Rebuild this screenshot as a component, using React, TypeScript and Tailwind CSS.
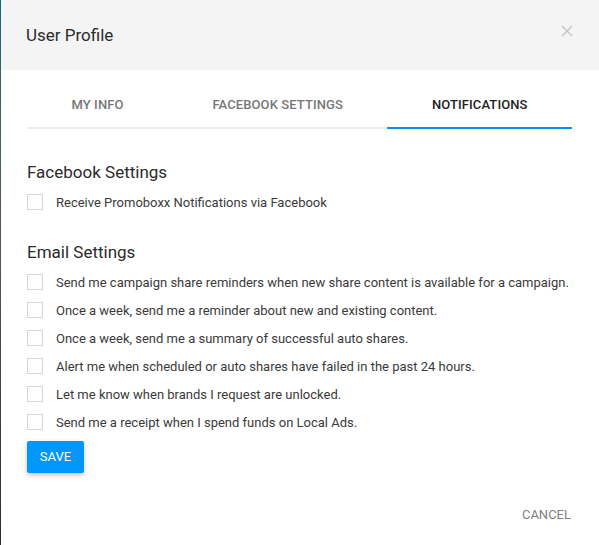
import React, { useState } from 'react';

const emailOptions = [
  'Send me campaign share reminders when new share content is available for a campaign.',
  'Once a week, send me a reminder about new and existing content.',
  'Once a week, send me a summary of successful auto shares.',
  'Alert me when scheduled or auto shares have failed in the past 24 hours.',
  'Let me know when brands I request are unlocked.',
  'Send me a receipt when I spend funds on Local Ads.',
];

const tabs = ['My Info', 'Facebook Settings', 'Notifications'];

function CheckRow({ label }: { label: string }) {
  const [checked, setChecked] = useState(false);
  return (
    <label className="flex items-center h-[28px] cursor-pointer">
      <span
        onClick={() => setChecked(!checked)}
        className={`w-[16px] h-[16px] border shrink-0 ${checked ? 'bg-[#0096fa] border-[#0096fa]' : 'bg-white border-[#d6d6d6]'}`}
      />
      <span className="ml-[13px] text-[13px] text-[#3a3a3a] leading-none">{label}</span>
    </label>
  );
}

export default function App() {
  const [active, setActive] = useState(2);

  return (
    <div className="flex w-full h-[545px] overflow-hidden" style={{ fontFamily: 'Roboto, "Liberation Sans", sans-serif' }}>
      <div className="w-[1px] bg-gradient-to-b from-[#0b6a73] via-[#555] to-[#2c2c2c] shrink-0" />
      <div className="flex-1 bg-white flex flex-col">
        {/* header */}
        <div className="h-[70px] bg-[#f4f4f4] flex items-center justify-between pl-[25px] pr-[26px]">
          <h1 className="text-[17px] text-[#2b2b2b] leading-none">User Profile</h1>
          <button className="text-[#c4c4c4] -mt-[8px]">
            <svg width="12" height="12" viewBox="0 0 12 12" stroke="currentColor" strokeWidth="1.4" fill="none">
              <path d="M1 1L11 11M11 1L1 11" />
            </svg>
          </button>
        </div>

        <div className="px-[26px]">
          {/* tabs */}
          <div className="flex mt-[12px] mr-[1px]">
            {tabs.map((t, i) => (
              <button
                key={t}
                onClick={() => setActive(i)}
                className={`flex-auto h-[47px] flex items-center justify-center border-b-2 text-[13px] font-medium uppercase tracking-[0.1px] ${
                  active === i ? 'border-[#0a8ef0] text-[#222]' : 'border-[#ececec] text-[#777]'
                }`}
              >
                {t}
              </button>
            ))}
          </div>

          {/* facebook */}
          <h2 className="mt-[33px] text-[17px] leading-[20px] text-[#2b2b2b]">Facebook Settings</h2>
          <div className="mt-[6px]">
            <CheckRow label="Receive Promoboxx Notifications via Facebook" />
          </div>

          {/* email */}
          <h2 className="mt-[26px] text-[17px] leading-[20px] text-[#2b2b2b]">Email Settings</h2>
          <div className="mt-[6px] flex flex-col">
            {emailOptions.map((o) => (
              <CheckRow key={o} label={o} />
            ))}
          </div>

          <button className="mt-[5px] w-[57px] h-[32px] rounded-[2px] bg-[#0096fa] text-white text-[13px] uppercase shadow-[0_2px_5px_rgba(0,0,0,0.25)]">
            Save
          </button>

          <div className="flex justify-end mt-[34px] pr-[2px]">
            <button className="text-[13px] text-[#808080] uppercase leading-[16px]">Cancel</button>
          </div>
        </div>
      </div>
    </div>
  );
}
